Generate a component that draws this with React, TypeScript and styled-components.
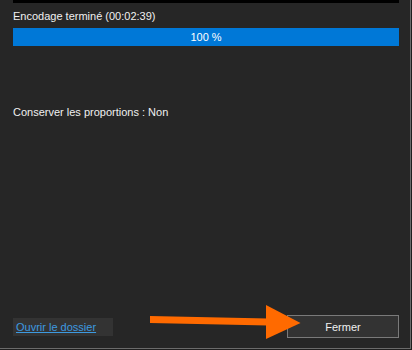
import React from 'react';
import styled, { createGlobalStyle } from 'styled-components';

const GlobalStyle = createGlobalStyle`
  html, body {
    margin: 0;
    padding: 0;
    background: #1f1f1f;
  }
  body {
    font-family: "Liberation Sans", "Noto Sans", sans-serif;
  }
`;

const Window = styled.div`
  position: relative;
  box-sizing: border-box;
  width: 411px;
  height: 349px;
  background: #262626;
  border-right: 1px solid #6b6b6b;
  border-bottom: 1px solid #6b6b6b;
  padding: 0 11px 10px 13px;
  display: flex;
  flex-direction: column;
  color: #f0f0f0;
  font-size: 11px;
`;

const TopStrip = styled.div`
  height: 3px;
  background: #000;
`;

const Label = styled.div<{ $top: number }>`
  margin-top: ${(p) => p.$top}px;
  line-height: 16px;
  white-space: nowrap;
`;

const Progress = styled.div`
  margin-top: 4px;
  height: 18px;
  background: #0078d7;
  color: #fff;
  display: flex;
  align-items: center;
  justify-content: center;
`;

const Spacer = styled.div`
  flex: 1;
`;

const Footer = styled.div`
  display: flex;
  align-items: center;
  justify-content: space-between;
  height: 23px;
`;

const LinkBox = styled.div`
  width: 100px;
  height: 18px;
  background: #333333;
  display: flex;
  align-items: center;
  padding-left: 3px;
  box-sizing: border-box;
`;

const FolderLink = styled.a`
  color: #3d9ae0;
  text-decoration: underline;
  cursor: pointer;
  white-space: nowrap;
`;

const Button = styled.button`
  width: 112px;
  height: 23px;
  background: #333333;
  border: 1px solid #7a7a7a;
  color: #f0f0f0;
  font-family: inherit;
  font-size: 11px;
  padding: 0;
`;

const ArrowLayer = styled.svg`
  position: absolute;
  left: 0;
  top: 0;
  pointer-events: none;
`;

export default function App() {
  return (
    <>
      <GlobalStyle />
      <Window>
        <TopStrip />
        <Label $top={5}>Encodage terminé (00:02:39)</Label>
        <Progress>100 %</Progress>
        <Label $top={58}>Conserver les proportions : Non</Label>
        <Spacer />
        <Footer>
          <LinkBox>
            <FolderLink>Ouvrir le dossier</FolderLink>
          </LinkBox>
          <Button>Fermer</Button>
        </Footer>
        <ArrowLayer width="411" height="349" viewBox="0 0 411 349">
          <polygon points="150,316 268,318.5 268,325.5 150,323" fill="#ff6a00" />
          <polygon points="266,305 300.5,323 266,339" fill="#ff6a00" />
        </ArrowLayer>
      </Window>
    </>
  );
}
